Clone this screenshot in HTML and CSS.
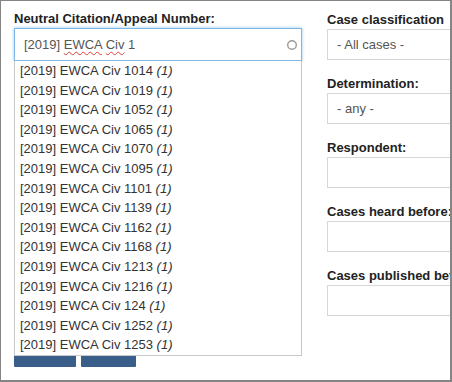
FILE: index.html
```html
<!DOCTYPE html>
<html lang="en">
    <head>
        <title>Case search</title>
        <link rel="stylesheet" href="styles.css">
    </head>
    <body>
        <div id="page">
            <div class="col col-left">
                <label class="field-label">Neutral Citation/Appeal Number:</label>
                <div class="combo">
                    <div class="combo-input">
                        <span>[2019] <span class="misspelt">EWCA</span> <span class="misspelt">Civ</span> 1</span>
                        <svg class="spinner" width="12" height="12" viewBox="0 0 12 12">
                            <circle cx="6" cy="6" r="4.3" fill="none" stroke="#9a9a9a" stroke-width="1.4"/>
                        </svg>
                    </div>
                    <ul class="suggest">
                        <li>[2019] EWCA Civ 1014 <i>(1)</i></li>
                        <li>[2019] EWCA Civ 1019 <i>(1)</i></li>
                        <li>[2019] EWCA Civ 1052 <i>(1)</i></li>
                        <li>[2019] EWCA Civ 1065 <i>(1)</i></li>
                        <li>[2019] EWCA Civ 1070 <i>(1)</i></li>
                        <li>[2019] EWCA Civ 1095 <i>(1)</i></li>
                        <li>[2019] EWCA Civ 1101 <i>(1)</i></li>
                        <li>[2019] EWCA Civ 1139 <i>(1)</i></li>
                        <li>[2019] EWCA Civ 1162 <i>(1)</i></li>
                        <li>[2019] EWCA Civ 1168 <i>(1)</i></li>
                        <li>[2019] EWCA Civ 1213 <i>(1)</i></li>
                        <li>[2019] EWCA Civ 1216 <i>(1)</i></li>
                        <li>[2019] EWCA Civ 124 <i>(1)</i></li>
                        <li>[2019] EWCA Civ 1252 <i>(1)</i></li>
                        <li>[2019] EWCA Civ 1253 <i>(1)</i></li>
                    </ul>
                </div>
                <div class="buttons">
                    <div class="btn btn-search" title="Search"></div>
                    <div class="btn btn-reset" title="Reset"></div>
                </div>
            </div>

            <div class="col col-right">
                <div class="group">
                    <label class="field-label">Case classification</label>
                    <div class="box">- All cases -</div>
                </div>
                <div class="group">
                    <label class="field-label">Determination:</label>
                    <div class="box">- any -</div>
                </div>
                <div class="group">
                    <label class="field-label">Respondent:</label>
                    <div class="box"></div>
                </div>
                <div class="group">
                    <label class="field-label">Cases heard before:</label>
                    <div class="box"></div>
                </div>
                <div class="group">
                    <label class="field-label">Cases published before:</label>
                    <div class="box"></div>
                </div>
            </div>
        </div>
    </body>
</html>
```

FILE: styles.css
```css
*{
    margin: 0px;
    padding: 0px;
    box-sizing: border-box;
}
body{
    font-family: "Liberation Sans", Arial, sans-serif;
    font-size: 13px;
    background: white;
}

#page{
    width: 452px;
    height: 382px;
    border-style: solid;
    border-color: #858585;
    border-width: 1px 2px 2px 1px;
    padding: 9px 0 0 13px;
    overflow: hidden;
    display: flex;
    gap: 25px;
}

.col-left{
    width: 288px;
    flex-shrink: 0;
}
.col-right{
    width: 240px;
    flex-shrink: 0;
    margin-top: 1px;
}

.field-label{
    display: block;
    font-weight: bold;
    line-height: 18px;
    color: #222;
    white-space: nowrap;
}

/* autocomplete */
.combo{
    position: relative;
}
.combo-input{
    height: 33px;
    border: 1px solid #7fb6e4;
    box-shadow: 0 0 3px rgba(102, 175, 233, 0.7);
    color: #555;
    padding: 0 0 0 9px;
    display: flex;
    align-items: center;
    justify-content: space-between;
    line-height: 18px;
}
.misspelt{
    text-decoration: underline wavy #e0403a;
    text-decoration-thickness: 1px;
    text-underline-offset: 2px;
}
.spinner{
    margin-right: 3px;
}
.suggest{
    position: absolute;
    top: 33px;
    left: 0;
    right: 0;
    list-style: none;
    background: white;
    border: 1px solid #c8c8c8;
    border-top: none;
    padding-left: 5px;
    z-index: 2;
}
.suggest li{
    line-height: 19.6px;
    color: #333;
    white-space: nowrap;
}

.buttons{
    display: flex;
    gap: 5px;
    margin-top: 272px;
}
.btn{
    height: 34px;
    background-color: #3a5e8a;
    border-radius: 0 0 1px 1px;
}
.btn-search{
    width: 62px;
}
.btn-reset{
    width: 55px;
}

/* right side */
.group{
    margin-bottom: 15px;
}
.box{
    height: 31px;
    border: 1px solid #d6d6d6;
    color: #555;
    padding-left: 9px;
    line-height: 29px;
    font-size: 13px;
}
```
